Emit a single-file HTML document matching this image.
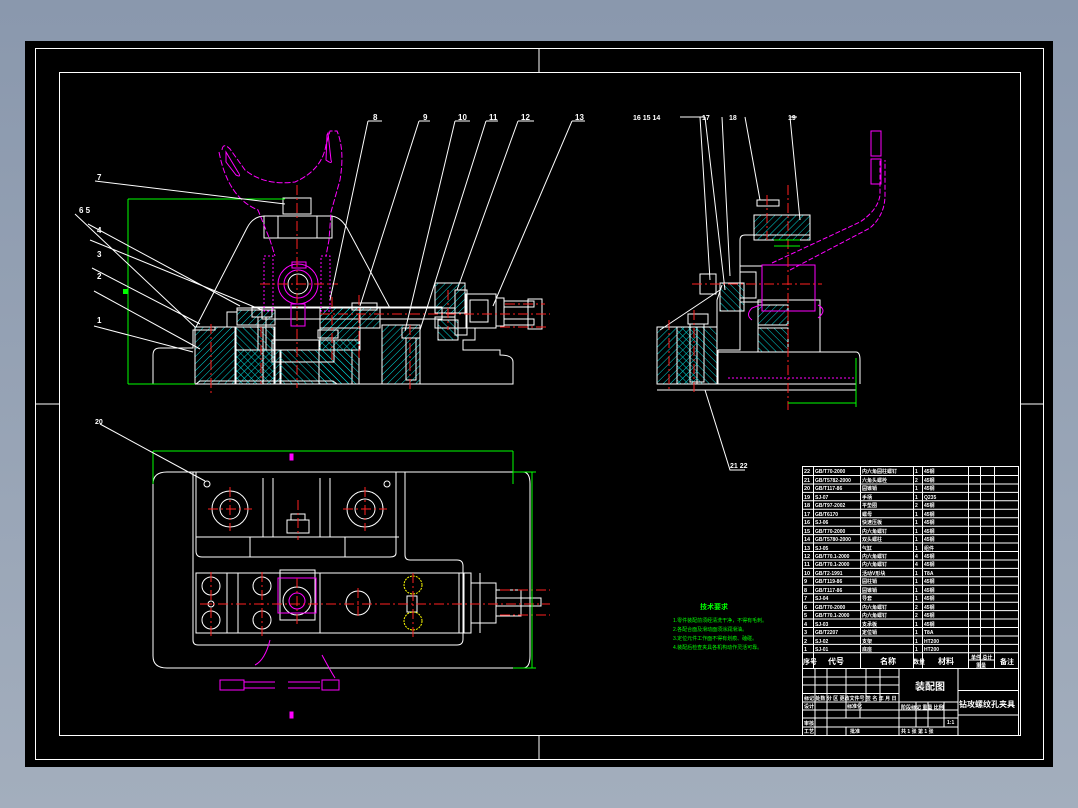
<!DOCTYPE html>
<html><head><meta charset="utf-8"><style>
html,body{margin:0;padding:0;width:1078px;height:808px;overflow:hidden;background:#8b99ad}
svg{display:block}
text{font-family:"Liberation Sans","Noto Sans CJK SC",sans-serif}
</style></head><body>
<svg width="1078" height="808" viewBox="0 0 1078 808" xmlns="http://www.w3.org/2000/svg">
<defs>
<linearGradient id="bg" x1="0" y1="0" x2="0" y2="1"><stop offset="0" stop-color="#8a98ad"/><stop offset="1" stop-color="#a3aebd"/></linearGradient>
<pattern id="h" width="5" height="5" patternUnits="userSpaceOnUse" patternTransform="rotate(45)"><line x1="0" y1="0" x2="0" y2="5" stroke="#00d8d8" stroke-width="1"/></pattern>
<pattern id="h2" width="5" height="5" patternUnits="userSpaceOnUse" patternTransform="rotate(-45)"><line x1="0" y1="0" x2="0" y2="5" stroke="#00d8d8" stroke-width="1"/></pattern>
</defs>
<rect width="1078" height="808" fill="url(#bg)"/>
<rect x="25" y="41" width="1028" height="726" fill="#000"/>
<g fill="none" stroke="#fff" stroke-width="1">
<rect x="35.5" y="48.5" width="1008" height="711"/>
<rect x="59.5" y="72.5" width="961" height="663"/>
<path d="M539 48V72M539 736V760M35 404H59M1020 404H1044"/>
</g>

<!-- FRONT VIEW -->
<g fill="none" stroke-width="1">
<g stroke="#fff">
<rect x="195" y="327" width="40" height="57" fill="url(#h)"/>
<rect x="236" y="327" width="38" height="57" fill="url(#h2)"/>
<rect x="237" y="310" width="38" height="15" fill="url(#h)"/>
<rect x="236" y="350" width="45" height="34" fill="url(#h)"/>
<rect x="280" y="350" width="72" height="34" fill="url(#h2)"/>
<rect x="320" y="308" width="40" height="42" fill="url(#h)"/>
<rect x="319" y="340" width="40" height="44" fill="url(#h2)"/>
<rect x="320" y="308" width="60" height="20" fill="url(#h)"/>
<rect x="382" y="325" width="38" height="59" fill="url(#h)"/>
<rect x="263" y="327" width="12" height="57" fill="none"/>
<rect x="435" y="283" width="30" height="30" fill="url(#h)"/>
<rect x="438" y="320" width="20" height="20" fill="url(#h2)"/>
</g>
<g stroke="#fff">
<path d="M153 355Q153 348 160 348H193V330H215V327H227V312H237V308H455V317H435V328H475V340H463V350H500V355Q513 355 513 362V384H337L333 381H200L196 384H153Z"/>
<path d="M196 327L247 228Q253 216 265 216H330Q340 216 347 228L390 308"/>
<rect x="283" y="198" width="28" height="16"/>
<rect x="264" y="216" width="68" height="22"/>
<path d="M278 216V238M317 216V238"/>
<rect x="272" y="340" width="62" height="22"/>
<rect x="318" y="330" width="20" height="8"/>
<rect x="352" y="303" width="25" height="7"/>
<rect x="252" y="307" width="20" height="10"/>
<rect x="258" y="317" width="8" height="33"/>
<rect x="402" y="328" width="18" height="10"/>
<rect x="406" y="338" width="10" height="42"/>
<rect x="455" y="290" width="12" height="45"/>
<rect x="466" y="294" width="30" height="34"/>
<rect x="470" y="300" width="18" height="22"/>
<rect x="496" y="298" width="8" height="28"/>
<rect x="504" y="301" width="30" height="6"/>
<rect x="504" y="319" width="30" height="6"/>
<rect x="528" y="299" width="14" height="30"/>
<rect x="262" y="307" width="180" height="12"/>
</g>
<g stroke="#ff00ff">
<path d="M222 150Q223 142 230 149L245 170Q265 186 295 182Q322 170 326 145L330 131H337Q345 150 340 180L331 212L329 240L326 256" stroke-dasharray="6 2"/>
<path d="M219 152Q228 198 258 210L270 240L275 256" stroke-dasharray="6 2"/>
<path d="M226 152L238 172Q242 178 236 175L226 162Z"/>
<path d="M328 133L331 160Q333 165 326 160L327 135Z"/>
<circle cx="298" cy="284" r="20"/>
<circle cx="298" cy="284" r="14"/>
<circle cx="298" cy="284" r="10" stroke="#fff"/>
<rect x="292" y="262" width="14" height="6"/>
<rect x="291" y="304" width="14" height="22"/>
<rect x="264" y="256" width="9" height="55" stroke-dasharray="2 2"/>
<rect x="321" y="256" width="9" height="55" stroke-dasharray="2 2"/>
</g>
<g stroke="#ff2020" stroke-dasharray="10 3 2 3">
<path d="M297 185V388M260 284H338M211 324V394M261 327V384M332 297V360M359 295V358M410 325V392M320 314H550M448 290V330M505 304H545M500 327H548"/>
</g>
<path d="M128 199H285M128 199V384M128 384H195" stroke="#00ff00"/>
<rect x="123" y="289" width="5" height="5" fill="#00ff00"/>
<g stroke="#fff">
<path d="M95 181L285 204M75 214L195 327M88 224L240 306M90 240L262 310M92 268L200 324M94 291L200 349M94 326L193 352"/>
<path d="M368 121H382M368 121L330 300M419 121H430M419 121L360 306M455 121H470M455 121L405 331M486 121H498M486 121L420 330M518 121H534M518 121L457 290M572 121H585M572 121L493 306"/>
</g>
</g>
<g fill="#fff" font-size="8" font-weight="bold">
<text x="373" y="120">8</text><text x="423" y="120">9</text><text x="458" y="120">10</text><text x="489" y="120">11</text><text x="521" y="120">12</text><text x="575" y="120">13</text>
<text x="97" y="180">7</text><text x="79" y="213">6 5</text><text x="97" y="233">4</text><text x="97" y="257">3</text><text x="97" y="279">2</text><text x="97" y="323">1</text>
</g>

<!-- SIDE VIEW -->
<g fill="none" stroke="#fff">
<rect x="657" y="327" width="40" height="57" fill="url(#h)"/>
<rect x="677" y="327" width="40" height="57" fill="url(#h2)"/>
<rect x="754" y="215" width="56" height="25" fill="url(#h)"/>
<rect x="720" y="283" width="24" height="28" fill="url(#h2)"/>
<rect x="758" y="305" width="30" height="20" fill="url(#h)"/>
<rect x="758" y="328" width="30" height="24" fill="url(#h2)"/>
<path d="M657 384H856M657 390H856M718 350V384M718 350H740V240Q740 235 745 235H810M717 350V300L722 285"/>
<path d="M717 352H856Q860 352 860 360V384"/>
<rect x="740" y="266" width="22" height="36"/>
<rect x="758" y="300" width="62" height="52"/>
<rect x="688" y="314" width="20" height="10"/>
<rect x="690" y="324" width="14" height="58"/>
<rect x="757" y="200" width="22" height="6"/>
<rect x="700" y="274" width="16" height="20"/>
<rect x="740" y="272" width="16" height="26"/>
<path d="M680 117H705M705 117L725 290M700 117L710 280M722 117L730 276M745 117L760 200M790 117L800 220M790 117H797M705 390L730 470H745"/>
<path d="M720 290L660 330"/>
</g>
<g fill="none" stroke="#ff00ff">
<path d="M762 265H815V311H762Z"/>
<path d="M752 320Q745 315 752 308L760 305M818 305Q828 310 818 318"/>
<path d="M772 263L860 222Q878 210 880 195V160M790 270L870 228Q885 215 885 195V160" stroke-dasharray="5 2"/>
<rect x="871" y="131" width="10" height="25"/>
<rect x="871" y="159" width="10" height="25"/>
<path d="M728 378H856" stroke-dasharray="2 2"/>
</g>
<g stroke="#ff2020" fill="none" stroke-dasharray="10 3 2 3">
<path d="M788 185V410M692 284H822M669 320V392M694 310V392M767 195V240"/>
</g>
<path d="M788 403H856M856 358V407M774 240H800M774 246H800" stroke="#00ff00" fill="none"/>
<g fill="#fff" font-size="7" font-weight="bold">
<text x="633" y="120">16 15 14</text><text x="702" y="120">17</text><text x="729" y="120">18</text><text x="788" y="120">19</text><text x="730" y="468">21 22</text>
</g>

<!-- TOP VIEW -->
<g fill="none" stroke="#fff">
<path d="M167 472H523Q530 472 530 484V656Q530 668 523 668H167Q153 668 153 656V484Q153 472 167 472Z"/>
<path d="M193 472V640Q193 645 198 645H457Q463 645 463 639V566Q463 560 457 560H410Q405 560 405 555V472"/>
<path d="M405 472V555M396 472V553Q396 557 390 557H202Q196 557 196 551V472"/>
<path d="M196 537H399M250 537V557M345 537V557"/>
<path d="M263 478V537M273 478V537M320 478V537M330 478V537"/>
<circle cx="230" cy="509" r="18"/><circle cx="230" cy="509" r="10"/>
<circle cx="365" cy="509" r="18"/><circle cx="365" cy="509" r="10"/>
<circle cx="207" cy="484" r="3"/><circle cx="387" cy="484" r="3"/>
<rect x="287" y="520" width="22" height="13"/><rect x="291" y="514" width="14" height="6"/>
<rect x="196" y="573" width="268" height="60"/>
<path d="M227 573V633M238 573V633M320 573V633M480 573V633"/>
<rect x="459" y="573" width="12" height="60"/>
<circle cx="211" cy="586" r="9"/><circle cx="211" cy="620" r="9"/><circle cx="211" cy="604" r="3"/>
<circle cx="262" cy="586" r="9"/><circle cx="262" cy="620" r="9"/>
<rect x="280" y="570" width="35" height="50"/>
<circle cx="297" cy="601" r="14"/>
<circle cx="358" cy="603" r="12"/>
<rect x="407" y="596" width="10" height="16"/>
<rect x="471" y="583" width="25" height="40"/>
<rect x="496" y="590" width="25" height="26"/>
<rect x="496" y="598" width="45" height="8"/>
</g>
<g fill="none" stroke="#ffff00" stroke-dasharray="2 1"><circle cx="413" cy="585" r="9"/><circle cx="413" cy="621" r="9"/></g>
<g fill="none" stroke="#ff00ff">
<rect x="278" y="578" width="38" height="35"/>
<circle cx="297" cy="601" r="8"/>
<path d="M270 640Q265 660 255 665M322 655Q330 670 335 678"/>
<rect x="220" y="680" width="24" height="10"/><path d="M244 682H275M244 688H275M288 682H320M288 688H320"/>
<rect x="322" y="680" width="17" height="10"/>
<rect x="290" y="454" width="3" height="6" fill="#ff00ff"/><rect x="290" y="712" width="3" height="6" fill="#ff00ff"/>
</g>
<g stroke="#ff2020" fill="none" stroke-dasharray="10 3 2 3">
<path d="M230 487V531M208 509H252M365 487V531M343 509H387M298 500V540M200 604H550M211 572V636M262 572V636M413 573V637M358 588V618M500 590H550M500 615H550M297 578V625"/>
</g>
<path d="M153 451H513M153 451V484M513 451V484M513 472H536M513 668H536M532 472V668" stroke="#00ff00" fill="none"/>
<path d="M100 424L205 481" stroke="#fff"/>
<text x="95" y="424" fill="#fff" font-size="7" font-weight="bold">20</text>

<g fill="#00ff00" font-size="5">
<text x="700" y="609" font-size="7" font-weight="bold">技术要求</text>
<text x="673" y="622">1.零件装配前须经清洗干净，不得有毛刺。</text>
<text x="673" y="631">2.各配合面及滑动面须涂润滑油。</text>
<text x="673" y="640">3.定位元件工作面不得有划痕、磕碰。</text>
<text x="673" y="649">4.装配后检查夹具各机构动作灵活可靠。</text>
</g>

<!-- TITLE TABLE -->
<rect x="802" y="465" width="216" height="270" fill="#000"/>
<g fill="none" stroke="#fff" stroke-width="1">
<rect x="802.5" y="466.5" width="216" height="269"/>
<path d="M802 475.5H1018M802 484H1018M802 492.4H1018M802 500.8H1018M802 509.3H1018M802 517.7H1018M802 526.2H1018M802 534.6H1018M802 543H1018M802 551.5H1018M802 560H1018M802 568.4H1018M802 576.8H1018M802 585.3H1018M802 593.7H1018M802 602.2H1018M802 610.6H1018M802 619H1018M802 627.5H1018M802 636H1018M802 644.4H1018M802 652.8H1018M802 668.5H1018"/>
<path d="M813.5 466V668M860.5 466V668M913.5 466V668M922.5 466V668M968.5 466V668M980.5 466V668M994.5 466V668M969 660H994"/>
<path d="M802 677H899M802 685H899M802 693.5H899M802 702H899M802 710H958M802 718H899M802 727H958M899 668V735M958 668V735M958 690.5H1018M958 715H1018M899 702H958M899 718H958"/>
<path d="M815 668V735M827 668V735M846 668V718M866 668V702M880 668V702M846 727V735M860 702V718M916 702V727M928 702V727M944 702V727"/>
</g>
<g fill="#fff" font-size="5.5" font-weight="bold">
<text x="804" y="473">22</text><text x="804" y="482">21</text><text x="804" y="490">20</text><text x="804" y="499">19</text><text x="804" y="507">18</text><text x="804" y="516">17</text><text x="804" y="524">16</text><text x="804" y="533">15</text><text x="804" y="541">14</text><text x="804" y="550">13</text><text x="804" y="558">12</text><text x="804" y="566">11</text><text x="804" y="575">10</text><text x="804" y="583">9</text><text x="804" y="592">8</text><text x="804" y="600">7</text><text x="804" y="609">6</text><text x="804" y="617">5</text><text x="804" y="626">4</text><text x="804" y="634">3</text><text x="804" y="643">2</text><text x="804" y="651">1</text>
</g>
<g fill="#fff" font-size="5" font-weight="bold">
<text x="815" y="473">GB/T70-2000</text><text x="862" y="473">内六角圆柱螺钉</text><text x="915" y="473">1</text><text x="924" y="473">45钢</text>
<text x="815" y="482">GB/T5782-2000</text><text x="862" y="482">六角头螺栓</text><text x="915" y="482">2</text><text x="924" y="482">45钢</text>
<text x="815" y="490">GB/T117-86</text><text x="862" y="490">圆锥销</text><text x="915" y="490">1</text><text x="924" y="490">45钢</text>
<text x="815" y="499">SJ-07</text><text x="862" y="499">手柄</text><text x="915" y="499">1</text><text x="924" y="499">Q235</text>
<text x="815" y="507">GB/T97-2002</text><text x="862" y="507">平垫圈</text><text x="915" y="507">2</text><text x="924" y="507">45钢</text>
<text x="815" y="516">GB/T6170</text><text x="862" y="516">螺母</text><text x="915" y="516">1</text><text x="924" y="516">45钢</text>
<text x="815" y="524">SJ-06</text><text x="862" y="524">快速压板</text><text x="915" y="524">1</text><text x="924" y="524">45钢</text>
<text x="815" y="533">GB/T70-2000</text><text x="862" y="533">内六角螺钉</text><text x="915" y="533">1</text><text x="924" y="533">45钢</text>
<text x="815" y="541">GB/T5780-2000</text><text x="862" y="541">双头螺柱</text><text x="915" y="541">1</text><text x="924" y="541">45钢</text>
<text x="815" y="550">SJ-05</text><text x="862" y="550">气缸</text><text x="915" y="550">1</text><text x="924" y="550">组件</text>
<text x="815" y="558">GB/T70.1-2000</text><text x="862" y="558">内六角螺钉</text><text x="915" y="558">4</text><text x="924" y="558">45钢</text>
<text x="815" y="566">GB/T70.1-2000</text><text x="862" y="566">内六角螺钉</text><text x="915" y="566">4</text><text x="924" y="566">45钢</text>
<text x="815" y="575">GB/T2-1991</text><text x="862" y="575">活动V形块</text><text x="915" y="575">1</text><text x="924" y="575">T8A</text>
<text x="815" y="583">GB/T119-86</text><text x="862" y="583">圆柱销</text><text x="915" y="583">1</text><text x="924" y="583">45钢</text>
<text x="815" y="592">GB/T117-86</text><text x="862" y="592">圆锥销</text><text x="915" y="592">1</text><text x="924" y="592">45钢</text>
<text x="815" y="600">SJ-04</text><text x="862" y="600">导套</text><text x="915" y="600">1</text><text x="924" y="600">45钢</text>
<text x="815" y="609">GB/T70-2000</text><text x="862" y="609">内六角螺钉</text><text x="915" y="609">2</text><text x="924" y="609">45钢</text>
<text x="815" y="617">GB/T70.1-2000</text><text x="862" y="617">内六角螺钉</text><text x="915" y="617">2</text><text x="924" y="617">45钢</text>
<text x="815" y="626">SJ-03</text><text x="862" y="626">支承板</text><text x="915" y="626">1</text><text x="924" y="626">45钢</text>
<text x="815" y="634">GB/T2207</text><text x="862" y="634">定位销</text><text x="915" y="634">1</text><text x="924" y="634">T8A</text>
<text x="815" y="643">SJ-02</text><text x="862" y="643">支架</text><text x="915" y="643">1</text><text x="924" y="643">HT200</text>
<text x="815" y="651">SJ-01</text><text x="862" y="651">底座</text><text x="915" y="651">1</text><text x="924" y="651">HT200</text>
</g>
<g fill="#fff" font-weight="bold">
<text x="803" y="664" font-size="7">序号</text><text x="828" y="664" font-size="8">代号</text><text x="880" y="664" font-size="8">名称</text><text x="913" y="664" font-size="6">数量</text><text x="938" y="664" font-size="8">材料</text><text x="971" y="659" font-size="5">单件 总计</text><text x="976" y="667" font-size="5">重量</text><text x="1000" y="664" font-size="7">备注</text>
<text x="915" y="690" font-size="10">装配图</text>
<text x="959" y="707" font-size="8">钻攻螺纹孔夹具</text>
<text x="804" y="700" font-size="5">标记 处数 分 区 更改文件号 签 名 年 月 日</text>
<text x="804" y="708" font-size="5">设计</text><text x="847" y="708" font-size="5">标准化</text>
<text x="804" y="725" font-size="5">审核</text><text x="804" y="733" font-size="5">工艺</text><text x="850" y="733" font-size="5">批准</text>
<text x="901" y="709" font-size="5">阶段标记 重量 比例</text><text x="947" y="724" font-size="5">1:1</text>
<text x="901" y="733" font-size="5">共 1 张 第 1 张</text>
</g>
</svg>
</body></html>
